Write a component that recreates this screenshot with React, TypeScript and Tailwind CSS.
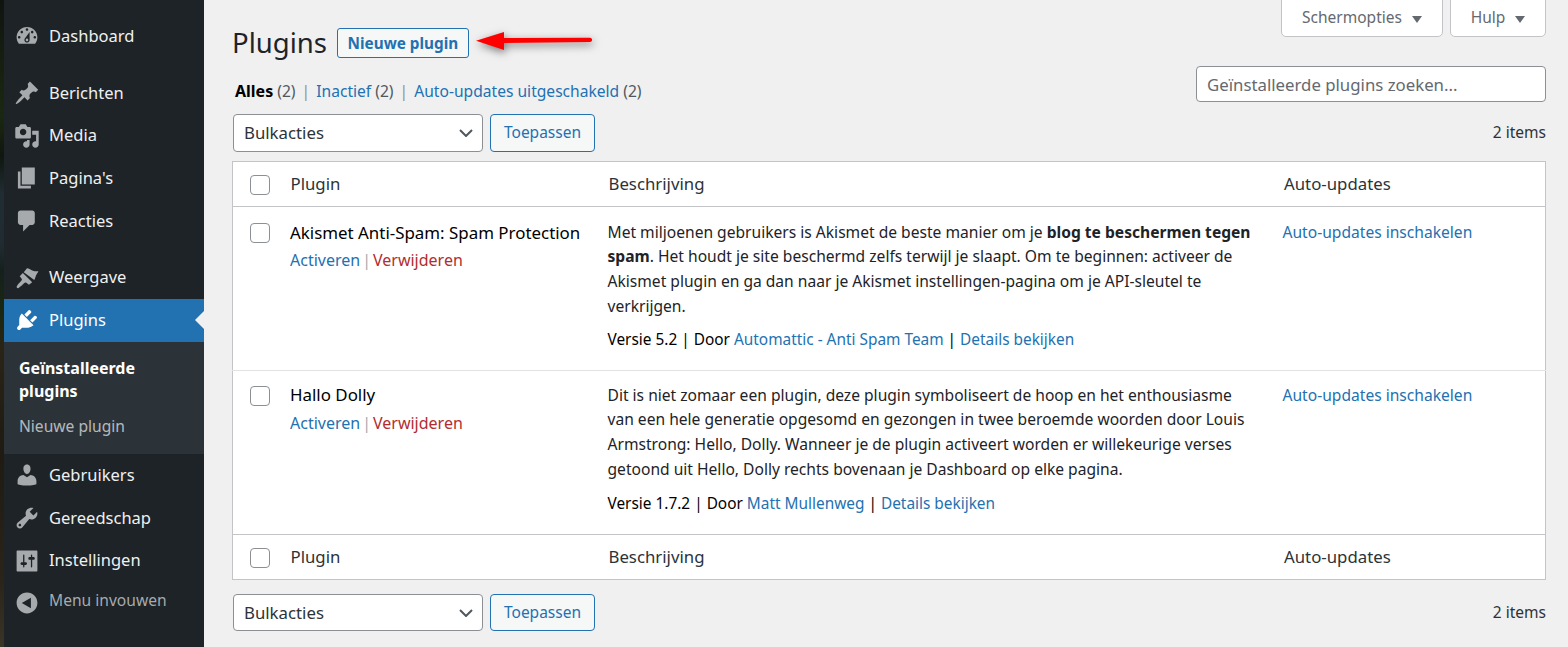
import type { ReactNode } from "react";

const FONT = "font-['Noto_Sans',sans-serif]";

const icons = {
  dashboard:
    "M3.76 16h12.48c1.1-1.37 1.76-3.11 1.76-5 0-4.42-3.58-8-8-8s-8 3.58-8 8c0 1.89.66 3.63 1.76 5zM10 4c.55 0 1 .45 1 1s-.45 1-1 1-1-.45-1-1 .45-1 1-1zM6 6c.55 0 1 .45 1 1s-.45 1-1 1-1-.45-1-1 .45-1 1-1zm8 0c.55 0 1 .45 1 1s-.45 1-1 1-1-.45-1-1 .45-1 1-1zm-5.37 5.55L12 7v6c0 1.1-.9 2-2 2s-2-.9-2-2c0-.57.24-1.08.63-1.45zM4 10c.55 0 1 .45 1 1s-.45 1-1 1-1-.45-1-1 .45-1 1-1zm12 0c.55 0 1 .45 1 1s-.45 1-1 1-1-.45-1-1 .45-1 1-1zm-5 3c0-.55-.45-1-1-1s-1 .45-1 1 .45 1 1 1 1-.45 1-1z",
  pin: "M10.44 3.02l1.82-1.82 6.36 6.35-1.83 1.82c-1.05-.68-2.48-.57-3.41.36l-.75.75c-.92.93-1.04 2.35-.35 3.41l-1.83 1.82-2.41-2.41-2.8 2.79c-.42.42-3.38 2.71-3.8 2.29s1.86-3.39 2.28-3.81l2.79-2.79L4.1 9.36l1.83-1.82c1.05.69 2.48.57 3.41-.36l.75-.75c.93-.92 1.04-2.35.35-3.41z",
  media:
    "M13 11V4c0-.55-.45-1-1-1h-1.67L9 1H5L3.67 3H2c-.55 0-1 .45-1 1v7c0 .55.45 1 1 1h10c.55 0 1-.45 1-1zM7 4.5c1.38 0 2.5 1.12 2.5 2.5S8.38 9.5 7 9.5 4.5 8.38 4.5 7 5.62 4.5 7 4.5zM14 6h5v10.5c0 1.38-1.12 2.5-2.5 2.5S14 17.88 14 16.5s1.12-2.5 2.5-2.5c.17 0 .34.02.5.05V9h-3V6zm-4 8.05V13h2v3.5c0 1.38-1.12 2.5-2.5 2.5S7 17.88 7 16.5 8.12 14 9.5 14c.17 0 .34.02.5.05z",
  page: "M6 15V2h10v13H6zm-1 1h8v2H3V5h2v11z",
  comment:
    "M5 2h9c1.1 0 2 .9 2 2v7c0 1.1-.9 2-2 2h-2l-5 5v-5H5c-1.1 0-2-.9-2-2V4c0-1.1.9-2 2-2z",
  appearance:
    "M7.5 5.5L10 2.5c1.5.2 2.5 1 4 1.7 1.5.6 3 .7 4.8.6-.8 1.5-1.8 2.6-2.2 4.2-.2.8-.5 1.7-1 2.5zM6.8 6.2L14 13.2l-2.5 2-1.5-1.2c-.8-.8-1.6-.5-2.3.1-1.5 1.5-3 2.9-4.2 3.6-.9.5-1.8-.3-1.4-1.1.7-1.4 2.2-3 3.5-4.4.6-.7.7-1.4 0-2.1L4.4 8.7z",
  plugins:
    "M13.11 4.36L9.87 7.6 8 5.73l3.24-3.24c.35-.34 1.05-.2 1.56.32.52.51.66 1.21.31 1.55zm-8 1.77l.91-1.12 9.01 9.01-1.19.84c-.71.71-2.63 1.16-3.82 1.16H6.14L4.9 17.26c-.59.59-1.54.59-2.12 0-.59-.58-.59-1.53 0-2.12l1.24-1.24v-3.88c0-1.13.4-3.19 1.09-3.89zm7.26 3.97l3.24-3.24c.34-.35 1.04-.21 1.55.31.52.51.66 1.21.31 1.55l-3.24 3.25z",
  users:
    "M10 9.25c-2.27 0-2.73-3.44-2.73-3.44C7 4.02 7.82 2 9.97 2c2.16 0 2.98 2.02 2.71 3.81 0 0-.41 3.44-2.68 3.44zm0 2.57L12.72 10c2.39 0 4.52 2.33 4.52 4.53v2.49s-3.65 1.13-7.24 1.13c-3.65 0-7.24-1.13-7.24-1.13v-2.49c0-2.25 1.94-4.48 4.47-4.48z",
  tools:
    "M16.68 9.77c-1.34 1.34-3.3 1.67-4.95.99l-5.41 6.52c-.99.99-2.59.99-3.58 0s-.99-2.59 0-3.57l6.52-5.42c-.68-1.65-.35-3.61.99-4.95 1.28-1.28 3.12-1.62 4.72-1.06l-2.89 2.89 2.82 2.82 2.86-2.87c.53 1.58.18 3.39-1.08 4.65zM3.81 16.21c.4.39 1.04.39 1.43 0 .4-.4.4-1.04 0-1.43-.39-.4-1.03-.4-1.43 0-.39.39-.39 1.03 0 1.43z",
  settings:
    "M17.5 18h-15c-.28 0-.5-.22-.5-.5v-15c0-.28.22-.5.5-.5h15c.28 0 .5.22.5.5v15c0 .28-.22.5-.5.5zM8 11h1c.55 0 1 .45 1 1s-.45 1-1 1H8v1.5c0 .28-.22.5-.5.5s-.5-.22-.5-.5V13H6c-.55 0-1-.45-1-1s.45-1 1-1h1V5.5c0-.28.22-.5.5-.5s.5.22.5.5V11zm5-2h-1c-.55 0-1-.45-1-1s.45-1 1-1h1V5.5c0-.28.22-.5.5-.5s.5.22.5.5V7h1c.55 0 1 .45 1 1s-.45 1-1 1h-1v5.5c0 .28-.22.5-.5.5s-.5-.22-.5-.5V9z",
  collapse: "M18 10c0-4.42-3.58-8-8-8s-8 3.58-8 8 3.58 8 8 8 8-3.58 8-8zm-5-4v8l-7-4z",
};

function MenuItem({ icon, label, active, muted }: { icon: keyof typeof icons; label: string; active?: boolean; muted?: boolean }) {
  return (
    <div className={`relative flex h-[42.67px] items-center text-[16.5px] ${active ? "bg-[#2271b1] text-white" : muted ? "text-[#a7aaad]" : "text-[#f0f0f1]"}`}>
      <svg viewBox="0 0 20 20" className={`ml-[9.5px] h-[26px] w-[26px] shrink-0 ${active ? "fill-white" : "fill-[#a7aaad]"}`}>
        <path fillRule="evenodd" d={icons[icon]} />
      </svg>
      <span className={`ml-[9.5px] ${muted ? "-mt-[4px] text-[15.6px]" : ""}`}>{label}</span>
      {active && <span className="absolute right-0 top-1/2 -mt-[9px] h-0 w-0 border-y-[9px] border-r-[9px] border-y-transparent border-r-[#f0f0f1]" />}
    </div>
  );
}

function Sidebar() {
  return (
    <aside className="w-[200px] shrink-0 bg-[#1d2327] pt-[15px]">
      <MenuItem icon="dashboard" label="Dashboard" />
      <div className="h-[14px]" />
      <MenuItem icon="pin" label="Berichten" />
      <MenuItem icon="media" label="Media" />
      <MenuItem icon="page" label="Pagina's" />
      <MenuItem icon="comment" label="Reacties" />
      <div className="h-[14px]" />
      <MenuItem icon="appearance" label="Weergave" />
      <MenuItem icon="plugins" label="Plugins" active />
      <div className="h-[112.3px] bg-[#2c3338] pl-[15px] pt-[15px] text-[15.6px] leading-[24px]">
        <div className="text-[16px] font-bold leading-[23.5px] text-white">Geïnstalleerde<br />plugins</div>
        <div className="mt-[10px] text-[#f0f6fcb3]">Nieuwe plugin</div>
      </div>
      <MenuItem icon="users" label="Gebruikers" />
      <MenuItem icon="tools" label="Gereedschap" />
      <MenuItem icon="settings" label="Instellingen" />
      <MenuItem icon="collapse" label="Menu invouwen" muted />
    </aside>
  );
}

function Tab({ label, className }: { label: string; className: string }) {
  return (
    <div className={`-mt-px flex h-[38px] items-center justify-center gap-[10px] rounded-b-[5px] border border-[#c3c4c7] bg-white text-[15.5px] text-[#646970] ${className}`}>
      {label}
      <span className="mt-[2px] h-0 w-0 border-x-[5px] border-t-[7px] border-x-transparent border-t-[#646970]" />
    </div>
  );
}

function BulkBar({ height }: { height: string }) {
  return (
    <div className={`flex items-stretch gap-[7px] pl-px ${height}`}>
      <div className="flex w-[250px] items-center justify-between rounded-[4px] border border-[#8c8f94] bg-white pl-[10px] pr-[9px] text-[16.8px] text-[#2c3338]">
        Bulkacties
        <svg viewBox="0 0 14 8" className="h-[8px] w-[14px] fill-none stroke-[#50575e] stroke-[2]">
          <path d="M1 1l6 6 6-6" />
        </svg>
      </div>
      <button className="w-[105px] rounded-[4px] border border-[#2271b1] bg-[#f6f7f7] text-[15.5px] text-[#2271b1]">Toepassen</button>
    </div>
  );
}

function Checkbox() {
  return <span className="block h-[20px] w-[20px] rounded-[4px] border border-[#8c8f94] bg-white" />;
}

function Link({ children, className = "text-[#2271b1]" }: { children: ReactNode; className?: string }) {
  return <a className={className}>{children}</a>;
}

function HeadRow({ top }: { top?: boolean }) {
  return (
    <tr className={`h-[45px] text-[16.8px] text-[#2c3338] ${top ? "border-b border-[#c3c4c7]" : "border-t border-[#c3c4c7]"}`}>
      <td className="pl-[17px] pt-[2px]"><Checkbox /></td>
      <td className="pl-[11px]">Plugin</td>
      <td className="pl-[11px]">Beschrijving</td>
      <td className="pl-[11.5px]">Auto-updates</td>
    </tr>
  );
}

function PluginRow({ name, desc, meta, last }: { name: string; desc: ReactNode; meta: ReactNode; last?: boolean }) {
  return (
    <tr className={`h-[164px] align-top border-b ${last ? "border-[#c3c4c7]" : "border-[#e1e2e4]"}`}>
      <td className={`pl-[17px] ${last ? "pt-[15px]" : "pt-[16px]"}`}><Checkbox /></td>
      <td className={`pl-[10.5px] ${last ? "pt-[11px]" : "pt-[13px]"}`}>
        <div className="text-[16.9px] leading-[25px] text-black">{name}</div>
        <div className={`text-[16px] leading-[25px] ${last ? "mt-[4px]" : "mt-[3px]"}`}>
          <Link>Activeren</Link><span className="mx-[2px] text-[#a7aaad]">|</span><Link className="text-[#b32d2e]">Verwijderen</Link>
        </div>
      </td>
      <td className={`pl-[10px] pr-[17px] text-[15.6px] leading-[24.7px] text-[#1d2327] ${last ? "pt-[11.7px]" : "pt-[12.7px]"}`}>
        <div>{desc}</div>
        <div className={`text-[15.4px] text-black ${last ? "mt-[10px]" : "mt-[9px]"}`}>{meta}</div>
      </td>
      <td className={`pl-[10px] text-[15.6px] leading-[25px] ${last ? "pt-[12px]" : "pt-[13px]"}`}><Link>Auto-updates inschakelen</Link></td>
    </tr>
  );
}

function PluginsPage() {
  return (
    <main className="min-w-0 flex-1 pl-[28px] pr-[22px]">
      <div className="flex items-start justify-between">
        <div className="pt-[28px]">
          <div className="flex items-center gap-[10px]">
            <h1 className="text-[27.5px] leading-[30px] text-[#1d2327]">Plugins</h1>
            <button className="h-[30px] w-[132px] rounded-[3px] border border-[#2271b1] bg-[#f6f7f7] text-[15.3px] font-bold text-[#2271b1]">Nieuwe plugin</button>
          </div>
          <div className="mt-[21px] pl-[3px] text-[15.6px] leading-[24px] text-[#50575e]">
            <b className="text-[16px] font-bold text-black">Alles</b> (2) <span className="mx-[2px] text-[#8c8f94]">|</span> <Link>Inactief</Link> (2) <span className="mx-[2px] text-[#8c8f94]">|</span> <Link>Auto-updates uitgeschakeld</Link> (2)
          </div>
        </div>
        <div className="flex w-[350px] flex-col items-end">
          <div className="flex gap-[7px]">
            <Tab label="Schermopties" className="w-[162px]" />
            <Tab label="Hulp" className="w-[96px]" />
          </div>
          <input
            readOnly
            placeholder="Geïnstalleerde plugins zoeken..."
            className="mt-[29px] h-[36px] w-[350px] rounded-[4px] border border-[#8c8f94] bg-white px-[10px] text-[16.8px] placeholder:text-[#646970]"
          />
        </div>
      </div>

      <div className="mt-[11px] flex items-center justify-between text-[15.5px] text-[#2c3338]">
        <BulkBar height="h-[38px]" />
        <span>2 items</span>
      </div>

      <table className="mt-[9px] w-full table-fixed border-collapse border border-[#c3c4c7] bg-white">
        <colgroup>
          <col className="w-[47px]" />
          <col className="w-[318px]" />
          <col className="w-[675px]" />
          <col />
        </colgroup>
        <tbody>
          <HeadRow top />
          <PluginRow
            name="Akismet Anti-Spam: Spam Protection"
            desc={<>Met miljoenen gebruikers is Akismet de beste manier om je <b className="font-bold">blog te beschermen tegen spam</b>. Het houdt je site beschermd zelfs terwijl je slaapt. Om te beginnen: activeer de Akismet plugin en ga dan naar je Akismet instellingen-pagina om je API-sleutel te verkrijgen.</>}
            meta={<>Versie 5.2 | Door <Link>Automattic - Anti Spam Team</Link> | <Link>Details bekijken</Link></>}
          />
          <PluginRow
            name="Hallo Dolly"
            desc={<>Dit is niet zomaar een plugin, deze plugin symboliseert de hoop en het enthousiasme van een hele generatie opgesomd en gezongen in twee beroemde woorden door Louis Armstrong: Hello, Dolly. Wanneer je de plugin activeert worden er willekeurige verses getoond uit Hello, Dolly rechts bovenaan je Dashboard op elke pagina.</>}
            meta={<>Versie 1.7.2 | Door <Link>Matt Mullenweg</Link> | <Link>Details bekijken</Link></>}
            last
          />
          <HeadRow />
        </tbody>
      </table>

      <div className="mt-[14px] flex items-center justify-between text-[15.5px] text-[#2c3338]">
        <BulkBar height="h-[37px]" />
        <span>2 items</span>
      </div>
    </main>
  );
}

export default function App() {
  return (
    <div className={`relative flex h-[647px] overflow-hidden bg-[#f0f0f1] ${FONT}`}>
      <div className="w-[4px] shrink-0 bg-[linear-gradient(180deg,#10140f_0%,#1b2810_18%,#10160f_24%,#202d33_30%,#1f2b30_38%,#15201c_42%,#1a2810_48%,#2a2416_54%,#1f1a12_70%,#2a241a_90%,#3a3526_100%)]" />
      <Sidebar />
      <PluginsPage />
      {/* red annotation arrow */}
      <svg viewBox="0 0 130 34" className="absolute left-[470px] top-[25px] h-[34px] w-[130px] drop-shadow-[1px_3px_4px_rgba(0,0,0,0.5)]">
        <path d="M6 15.7L34 7V13L120 12.7c2.8 0 2.8 4.3 0 4.3L34 18V25z" fill="#f00" />
      </svg>
    </div>
  );
}
